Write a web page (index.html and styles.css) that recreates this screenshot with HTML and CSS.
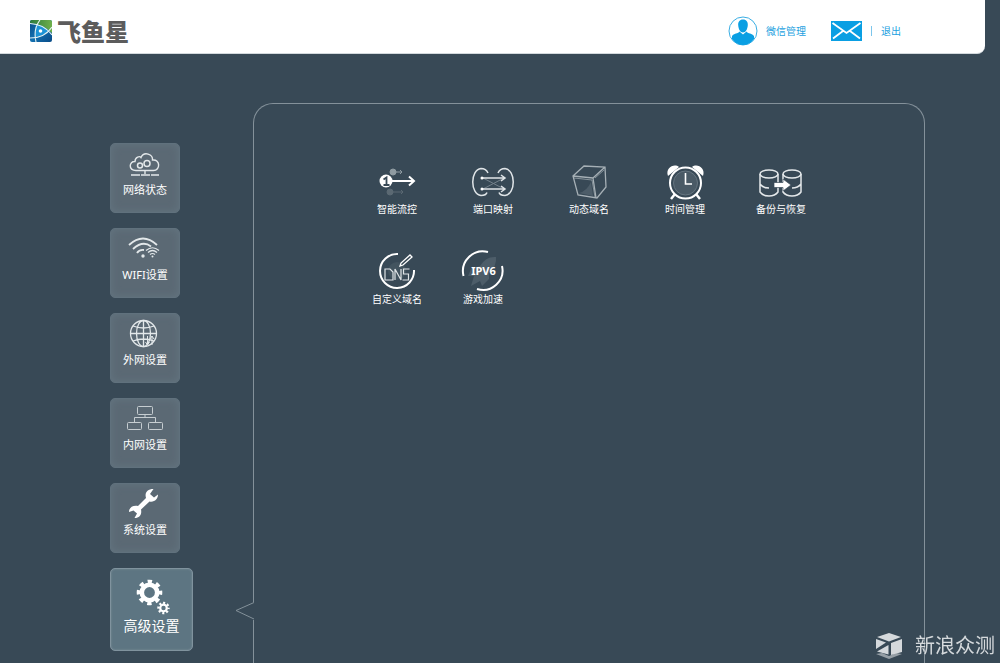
FILE: index.html
```html
<!DOCTYPE html>
<html lang="zh-CN">
<head>
<meta charset="utf-8">
<title>飞鱼星</title>
<link rel="stylesheet" href="styles.css">
</head>
<body>
<header class="header">
  <a class="logo" href="#">
    <svg class="logo-mark" viewBox="0 0 22 22">
      <defs>
        <linearGradient id="lb" x1="0" y1="0" x2="1" y2="1"><stop offset="0" stop-color="#0a4a86"/><stop offset=".5" stop-color="#1270b0"/><stop offset="1" stop-color="#0a4a86"/></linearGradient>
        <linearGradient id="lg" x1="0" y1="0" x2="1" y2="0"><stop offset="0" stop-color="#2c7a3c"/><stop offset="1" stop-color="#6fb04a"/></linearGradient>
      </defs>
      <rect width="22" height="22" rx="2" fill="url(#lb)"/>
      <path d="M0 2Q0 0 2 0H20Q22 0 22 2V13Q13 4 0 3Z" fill="url(#lg)"/>
      <path d="M6 4Q14 6 19 11Q13 16 5 17Q5 9 6 4Z" fill="#1c93d6"/>
      <path d="M0 3.500Q14 4 22 15M0 18Q15 18 22 7M10 0Q3 9 6 22" fill="none" stroke="#e8f4f4" stroke-width="1.100"/>
      <circle cx="10.500" cy="11" r="1.800" fill="#fff"/>
    </svg>
    <span>飞鱼星</span>
  </a>
  <nav class="account">
    <a class="account-user" href="#">
      <svg width="30" height="30" viewBox="0 0 30 30">
        <circle cx="15" cy="15" r="14" fill="#fff" stroke="#3aaee4"/>
        <path d="M15 3.500c3.500 0 5 2.500 4.800 5.500-.2 4-2 7.500-4.800 7.500s-4.600-3.500-4.800-7.500C10 6 11.500 3.500 15 3.500Z" fill="#0a9fe3"/>
        <path d="M11.500 15.500 15 18.500l3.500-3c1 2 6 2 7.500 4.500v3Q21.500 29 15 29T4 23v-3c1.500-2.500 6.500-2.500 7.500-4.500Z" fill="#0a9fe3"/>
      </svg>
      <span>微信管理</span>
    </a>
    <a class="account-mail" href="#" aria-label="mail">
      <svg width="31" height="20" viewBox="0 0 31 20">
        <rect width="31" height="20" fill="#0a9fe3"/>
        <path d="M1.500 2 15.500 12 29.500 2M2 17.500l10-7.500M29 17.500 19 10" fill="none" stroke="#fff" stroke-width="1.800"/>
      </svg>
    </a>
    <span class="divider"></span>
    <a href="#">退出</a>
  </nav>
</header>
<div class="layout">
  <nav class="sidebar">
    <a class="tile" href="#">
      <svg class="tile-icon" viewBox="0 0 36 30" fill="none" stroke="#e3e8ea" stroke-width="1.400">
        <path d="M9 21.500C1 21.500 2 12 8 12.500 8 7.500 13 7 14 8.500 17 2 26 5 25.500 11c8-1 8 10.500 1 10.500Z"/>
        <circle cx="13" cy="16.500" r="2.500" stroke-width="1.500"/><circle cx="20" cy="14.500" r="3" stroke-width="1.500"/>
        <path d="M18 22v3M4 26h9M14 26h9M24 26h8"/>
      </svg>
      <span>网络状态</span>
    </a>
    <a class="tile" href="#">
      <svg class="tile-icon" viewBox="0 0 36 30" fill="none" stroke="#e3e8ea" stroke-width="1.800">
        <path d="M2 11Q16-2 30 11M6 15Q16 6 24 12.500"/><path d="M10 19Q12 15.500 17 16"/>
        <circle cx="16" cy="22" r="1.700" fill="#e3e8ea" stroke="none"/>
        <path d="M19 16.500Q25.500 11 32 16.500M21 18.500Q25.500 14.500 30 18.500M23 20.500Q25.500 18.500 28 20.500" stroke-width="1.200"/>
        <circle cx="25.500" cy="22.500" r="1" fill="#e3e8ea" stroke="none"/>
      </svg>
      <span>WIFI设置</span>
    </a>
    <a class="tile" href="#">
      <svg class="tile-icon" viewBox="0 0 36 30" fill="none" stroke="#e3e8ea" stroke-width="1.300">
        <circle cx="16.500" cy="14.500" r="13"/><ellipse cx="16.500" cy="14.500" rx="7" ry="13"/>
        <path d="M16.500 1.500v26M3.500 14.500h26M6 7q10.500 4 21 0M6 22q10.500-4 21 0"/>
        <path d="M20.500 17v8m-2-2 2 3 2-3M25 26v-9m-2 3 2-3 2 3" stroke-width="1"/>
      </svg>
      <span>外网设置</span>
    </a>
    <a class="tile" href="#">
      <svg class="tile-icon" viewBox="0 0 36 30" fill="none" stroke="#c6cdd1">
        <rect x="10.500" y="2.500" width="15" height="8" rx="1"/><rect x=".5" y="18.500" width="14" height="7" rx="1"/><rect x="21.500" y="18.500" width="14" height="7" rx="1"/>
        <path d="M18 10.500v3M7.500 18.500v-5h21v5"/>
      </svg>
      <span>内网设置</span>
    </a>
    <a class="tile" href="#">
      <svg class="tile-icon" viewBox="0 0 36 30" fill="#fff">
        <path d="M26.500 0C20 0 17.500 4 19 9L11 17C6 16 2 18.500 2 23L6.500 21.500 10 24.500 7.500 29C13 29 15 25 14 20.500L22.500 12.500C27.500 13.500 31 10 31 5.500L27 8.500 23 5Z"/>
      </svg>
      <span>系统设置</span>
    </a>
    <a class="tile tile-active" href="#" aria-current="page">
      <svg class="tile-icon" viewBox="0 0 36 36" fill="none" stroke="#fff">
        <circle cx="15.500" cy="13.500" r="7.700" stroke-width="4.600"/>
        <circle cx="15.500" cy="13.500" r="11" stroke-width="3.600" stroke-dasharray="4.400 4.239" stroke-dashoffset="2.200"/>
        <circle cx="29.500" cy="29" r="3.300" stroke-width="2.200"/>
        <circle cx="29.500" cy="29" r="5" stroke-width="2.400" stroke-dasharray="2 1.927" stroke-dashoffset="1"/>
      </svg>
      <span>高级设置</span>
    </a>
  </nav>
  <main class="panel">
    <svg class="pointer" viewBox="0 0 19 18"><path d="M18.500 0V18" stroke="#384956" stroke-width="1"/><path d="M19 .5 1 8.500 19 17" fill="#384956" stroke="#84919a"/></svg>
    <div class="row">
      <a class="app" href="#">
        <svg class="app-icon" viewBox="0 0 44 44">
          <g stroke="#8f9ba2" fill="#8f9ba2"><circle cx="18" cy="13" r="3"/><path d="M18 13h9m-2-2 2 2-2 2" fill="none"/></g>
          <g stroke="#5b6973" fill="#5b6973"><circle cx="15" cy="33" r="3"/><path d="M15 33h13m-2-2 2 2-2 2" fill="none"/></g>
          <path d="M10 22h28m-4-4.500 5 4.500-5 4.500" stroke="#fff" stroke-width="2" fill="none"/>
          <circle cx="11" cy="22" r="6.500" fill="#fff"/><path d="M8.500 20.500 11.500 18.500V26M8.500 26h6" stroke="#384956" stroke-width="1.800" fill="none"/>
        </svg>
        <span>智能流控</span>
      </a>
      <a class="app" href="#">
        <svg class="app-icon" viewBox="0 0 44 44" fill="none" stroke="#dfe4e7" stroke-width="1.500">
          <path d="M17 14Q15 9.500 10 9.500C-1 11-1 35 10 36.500q5 0 6-3M27 14q2-4.500 7-4.500c11 1.500 11 25.500 0 27q-5 0-6-3"/>
          <path d="m12 19 21 11M12 30l21-11" stroke="#74818b" stroke-width="1"/>
          <path d="M11 19h22m-3-3 4 3-4 3M11 30h22m-3-3 4 3-4 3"/>
          <circle cx="11" cy="19" r="1.500" fill="#fff" stroke="none"/><circle cx="11" cy="30" r="1.500" fill="#fff" stroke="none"/>
        </svg>
        <span>端口映射</span>
      </a>
      <a class="app" href="#">
        <svg class="app-icon" viewBox="0 0 44 44" fill="none" stroke="#a6b0b6" stroke-width="1.300">
          <path d="M17 7 38 8 39 28 30 39 11 36 6 17ZM6 17l20 2L38 8M26 19l3 20"/>
          <path d="M7 19l18 2 3 17M28 19l9-8" stroke-width=".7"/>
          <path d="m24 23 2 14-14-3q8-2 12-11Z" fill="#4d5d69" stroke="none"/>
        </svg>
        <span>动态域名</span>
      </a>
      <a class="app" href="#">
        <svg class="app-icon" viewBox="0 0 44 44" fill="none" stroke="#fff">
          <path d="M5 17C2 9 11 4 16 8ZM40 17c3-8-6-13-11-9Z" fill="#fff" stroke="none"/>
          <path d="m12 35-4 5M33 35l4 5" stroke-width="2.500"/>
          <circle cx="22.500" cy="24" r="15.500" stroke-width="2" fill="#384956"/><circle cx="22.500" cy="24" r="12" fill="#4a5a66" stroke="#667580"/>
          <path d="M22.500 14v11H29" stroke-width="1.600"/>
        </svg>
        <span>时间管理</span>
      </a>
      <a class="app" href="#">
        <svg class="app-icon" viewBox="0 0 44 44" fill="none" stroke="#e4e8ea" stroke-width="1.500">
          <ellipse cx="10" cy="15" rx="9" ry="4"/><path d="M1 15v18q3 4 9 4t9-4V15M1 25q3 4 9 4"/>
          <ellipse cx="33" cy="15" rx="9" ry="4"/><path d="M24 15v18q3 4 9 4t9-4V15M33 29q6 0 9-4"/>
          <path d="M15 23.500h9V20l8 6-8 6v-3.500h-9Z" fill="#fff" stroke="#384956" stroke-width=".7"/>
        </svg>
        <span>备份与恢复</span>
      </a>
    </div>
    <div class="row row-compact">
      <a class="app" href="#">
        <svg class="app-icon" viewBox="0 0 44 44" fill="none" stroke="#fff">
          <circle cx="22" cy="22" r="9" fill="#43545f" stroke="none"/>
          <path d="M23 5A17 17 0 1 0 39 21" stroke-width="2"/>
          <path d="m25 17 1-3 9-8 2 2-9 8Z" stroke-width="1.300"/>
          <path d="M10 20h5l3 3v8h-8ZM20 31V20l6 11V20M34.500 20H28.500v5h5v6H27.500" stroke="#dfe4e7" stroke-width="1.200"/>
        </svg>
        <span>自定义域名</span>
      </a>
      <a class="app" href="#">
        <svg class="app-icon" viewBox="0 0 44 44" fill="none" stroke="#fff" stroke-width="2">
          <path d="M35 8Q25 7 19 17l-9 3-3 7h6l-3 10 9-5 2 5 7-7V24q8-7 7-16Z" fill="#4d5d69" stroke="none"/>
          <path d="M2.500 27A20 20 0 0 1 27 3M16 40A19.500 19.500 0 0 0 41 17"/>
          <text class="icon-text" x="22.500" y="26" text-anchor="middle">IPV6</text>
        </svg>
        <span>游戏加速</span>
      </a>
    </div>
  </main>
</div>
<footer class="watermark">
  <svg width="28" height="28" viewBox="0 0 28 28" fill="#d5d9dc">
    <path d="M14 1 26 5 14 9.500 2 5Z"/>
    <path d="M1 7 11 10.500 1 17ZM27 7V20L16 23V11ZM13.500 13V22.500L2 19.500Z"/>
    <path d="m1 22 6-1 7 3 7-3 6 1-13 5Z" opacity=".6"/>
  </svg>
  <span>新浪众测</span>
</footer>
</body>
</html>
```
FILE: styles.css
```css
* { box-sizing: border-box; }
body {
  margin: 0;
  min-height: 100vh;
  display: flex;
  flex-direction: column;
  background: #384956;
  color: #fff;
  font-family: "Noto Sans", "Noto Sans CJK SC", sans-serif;
  font-size: 10px;
  line-height: 16px;
}
a { color: inherit; text-decoration: none; }
svg { display: block; flex: none; }
.header {
  display: flex;
  justify-content: space-between;
  align-items: center;
  height: 54px;
  margin-right: 15px;
  padding: 8px 84px 0 30px;
  background: #fff;
  border-bottom: 1px solid #d3d9dd;
  border-bottom-right-radius: 8px;
}
.logo {
  display: flex;
  align-items: center;
  gap: 5px;
  color: #5c5c5c;
  font: 900 24px/26px "Noto Sans CJK SC", sans-serif;
}
.logo-mark { width: 22px; height: 22px; }
.account { display: flex; align-items: center; color: #1d9fe0; }
.account-user { display: flex; align-items: center; gap: 8px; }
.account-mail { margin-left: 25px; }
.divider { width: 1px; height: 10px; margin: 0 9px; background: #7cc6ec; }
.layout {
  flex: 1;
  display: flex;
  gap: 60px;
  padding: 49px 75px 0 110px;
}
.sidebar {
  display: flex;
  flex-direction: column;
  gap: 15px;
  width: 83px;
  padding: 40px 0 12px;
}
.tile {
  display: flex;
  flex-direction: column;
  align-items: center;
  gap: 3px;
  width: 70px;
  height: 70px;
  padding-top: 5px;
  border: 1px solid #60717d;
  border-radius: 5px;
  background: #5b6974;
  box-shadow: inset 0 0 8px #637580;
  font-size: 11px;
}
.tile-icon { width: 36px; height: 30px; }
.tile-active {
  gap: 1px;
  width: 83px;
  height: 83px;
  padding-top: 10px;
  border: 1px solid #80939e;
  background: #5d7582;
  box-shadow: inset 0 0 2px #80939e;
  font-size: 14px;
  line-height: 20px;
}
.tile-active .tile-icon { height: 36px; }
.panel {
  position: relative;
  flex: 1;
  padding: 55px 0 0 116px;
  border: 1px solid #84919a;
  border-bottom: 0;
  border-radius: 20px 20px 0 0;
}
.pointer {
  position: absolute;
  left: -19px;
  top: 498px;
  width: 19px;
  height: 18px;
}
.row { display: flex; gap: 42px; margin-bottom: 32px; }
.row-compact { gap: 32px; }
.app {
  display: flex;
  flex-direction: column;
  align-items: center;
  width: 54px;
  white-space: nowrap;
}
.app span { margin-top: -2px; }
.app-icon { width: 44px; height: 44px; }
.icon-text { fill: #fff; stroke: none; font: bold 11px "Noto Sans", sans-serif; }
.watermark {
  position: fixed;
  right: 5px;
  bottom: 3px;
  display: flex;
  align-items: center;
  gap: 12px;
  color: #d5d9dc;
  font-size: 20px;
  line-height: 28px;
}
```
